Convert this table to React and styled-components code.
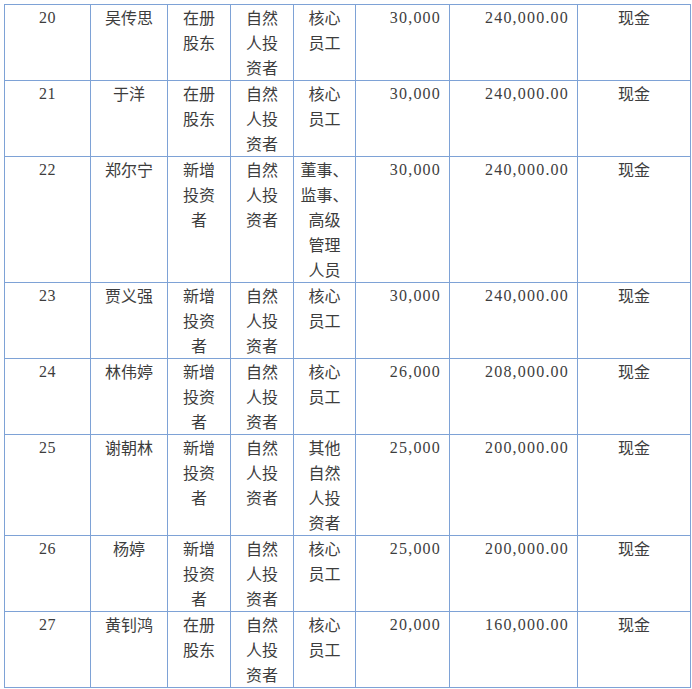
import React from 'react'
import styled, { createGlobalStyle } from 'styled-components'

const GlobalStyle = createGlobalStyle`
  html, body {
    margin: 0;
    padding: 0;
    background: #ffffff;
  }
`

const rows = [
  ['20', '吴传思', ['在册', '股东'], ['自然', '人投', '资者'], ['核心', '员工'], '30,000', '240,000.00', '现金'],
  ['21', '于洋', ['在册', '股东'], ['自然', '人投', '资者'], ['核心', '员工'], '30,000', '240,000.00', '现金'],
  ['22', '郑尔宁', ['新增', '投资', '者'], ['自然', '人投', '资者'], ['董事、', '监事、', '高级', '管理', '人员'], '30,000', '240,000.00', '现金'],
  ['23', '贾义强', ['新增', '投资', '者'], ['自然', '人投', '资者'], ['核心', '员工'], '30,000', '240,000.00', '现金'],
  ['24', '林伟婷', ['新增', '投资', '者'], ['自然', '人投', '资者'], ['核心', '员工'], '26,000', '208,000.00', '现金'],
  ['25', '谢朝林', ['新增', '投资', '者'], ['自然', '人投', '资者'], ['其他', '自然', '人投', '资者'], '25,000', '200,000.00', '现金'],
  ['26', '杨婷', ['新增', '投资', '者'], ['自然', '人投', '资者'], ['核心', '员工'], '25,000', '200,000.00', '现金'],
  ['27', '黄钊鸿', ['在册', '股东'], ['自然', '人投', '资者'], ['核心', '员工'], '20,000', '160,000.00', '现金'],
]

const colWidths = [86, 77, 63, 63, 62, 94, 128, 113]

const Page = styled.div`
  padding: 4px 0 0 4px;
`

const Table = styled.table`
  border-collapse: collapse;
  table-layout: fixed;
  width: 686px;
  font-size: 16px;
  color: #3d3d3d;
`

const Cell = styled.td`
  border: 1px solid #7ea2d6;
  padding: 0;
  vertical-align: top;
  white-space: nowrap;
  text-align: center;
  line-height: 25px;
  font-family: "Noto Sans CJK SC", sans-serif;
`

const NumCell = styled(Cell)`
  font-family: "Liberation Serif", serif;
  text-align: ${p => (p.$right ? 'right' : 'center')};
  padding-right: ${p => (p.$right ? '8px' : '0')};
  letter-spacing: ${p => (p.$right ? '1.2px' : '0.6px')};
`

function Lines({ items }) {
  return items.map((t, i) => (
    <React.Fragment key={i}>
      {i > 0 && <br />}
      {t}
    </React.Fragment>
  ))
}

export default function App() {
  return (
    <Page>
      <GlobalStyle />
      <Table>
        <colgroup>
          {colWidths.map((w, i) => <col key={i} style={{ width: w }} />)}
        </colgroup>
        <tbody>
          {rows.map(r => (
            <tr key={r[0]}>
              <NumCell>{r[0]}</NumCell>
              <Cell>{r[1]}</Cell>
              <Cell><Lines items={r[2]} /></Cell>
              <Cell><Lines items={r[3]} /></Cell>
              <Cell><Lines items={r[4]} /></Cell>
              <NumCell $right>{r[5]}</NumCell>
              <NumCell $right>{r[6]}</NumCell>
              <Cell>{r[7]}</Cell>
            </tr>
          ))}
        </tbody>
      </Table>
    </Page>
  )
}
